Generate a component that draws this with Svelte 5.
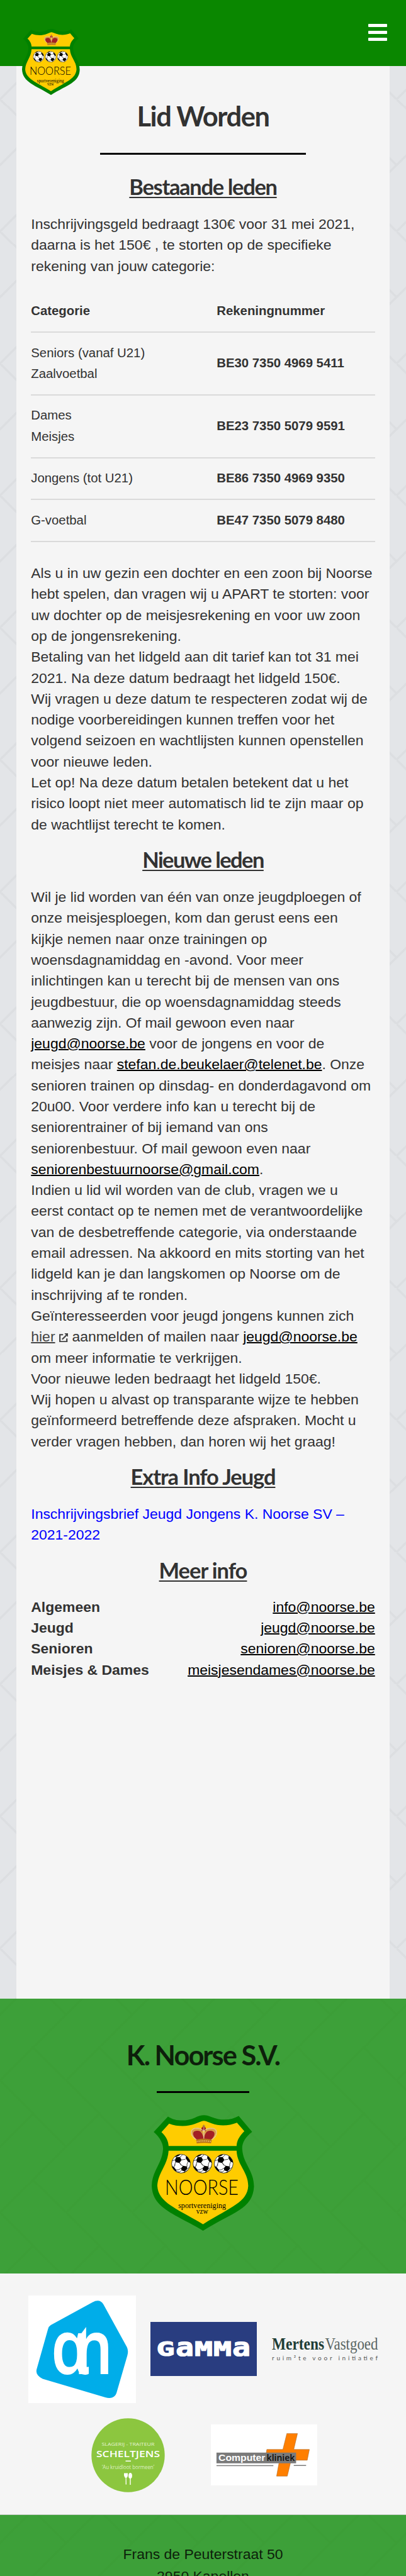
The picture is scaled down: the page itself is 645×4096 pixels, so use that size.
<script>
  const accounts = [
    { names: ['Seniors (vanaf U21)', 'Zaalvoetbal'], iban: 'BE30 7350 4969 5411' },
    { names: ['Dames', 'Meisjes'], iban: 'BE23 7350 5079 9591' },
    { names: ['Jongens (tot U21)'], iban: 'BE86 7350 4969 9350' },
    { names: ['G-voetbal'], iban: 'BE47 7350 5079 8480' }
  ];
  const contacts = [
    ['Algemeen', 'info@noorse.be'],
    ['Jeugd', 'jeugd@noorse.be'],
    ['Senioren', 'senioren@noorse.be'],
    ['Meisjes & Dames', 'meisjesendames@noorse.be']
  ];
</script>

{#snippet ball(cx)}
  <g transform="translate({cx} 427)">
    <circle r="75" fill="#fff" />
    <g fill="#000">
      <path d="M-38 -52L-8 -53L5 -30L-12 -6L-44 -12L-48 -30Z" />
      <path d="M16 17L48 22L50 42L30 62L4 54L2 36Z" />
      <path d="M40 -62Q70 -40 75 -8L56 -16L38 -42Z" />
      <path d="M-74 16L-56 28L-38 50L-36 66Q-66 48 -74 16Z" />
      <path d="M-50 -56Q-30 -74 -4 -75L-14 -66L-38 -54Z" />
      <path d="M10 74Q40 70 56 50L40 60Z" />
    </g>
    <path d="M5 -30L36 -36M-12 -6L2 12L16 17M-44 -12L-52 14L-56 28M-48 -30L-70 -24M-8 -53L12 -70M-52 14L-44 10M2 36L-18 48L-38 50M2 12L-10 -6M56 -16L48 4L48 22M30 62L24 74M4 54L-10 66L-36 62M50 42L66 28" fill="none" stroke="#111" stroke-width="4" />
    <circle r="75" fill="none" stroke="#111" stroke-width="4" />
  </g>
{/snippet}

{#snippet crest()}
  <svg class="crest" viewBox="42 38 817 925" preserveAspectRatio="none" aria-label="K. Noorse S.V.">
    <path fill="#008100" d="M172 50C235 92 325 88 385 60C440 34 470 32 520 54C600 86 675 80 737 45L844 172C790 215 762 260 765 310C772 430 858 480 859 610C850 790 690 815 452 963C235 830 50 790 42 605C45 480 125 430 133 310C134 260 100 210 58 174Z" />
    <g fill="#fc0">
      <path d="M181 107C250 134 335 130 385 110L440 88Q459 80 478 88L520 105C590 130 660 124 723 99L782 168C740 210 722 245 720 285H177C175 250 160 210 120 175Z" />
      <path d="M177 323H720C725 440 813 490 813 605C805 735 680 770 452 911C230 780 95 735 87 605C90 500 170 440 177 323Z" />
    </g>
    <g>
      <path d="M400 235C350 205 345 155 385 145C430 135 445 160 458 185C470 160 490 135 535 145C570 155 565 205 520 235Z" fill="#d9a14a" />
      <path d="M400 235C365 200 365 170 395 165C435 158 445 180 458 225C470 180 480 158 522 165C552 170 550 205 518 235Z" fill="#a31f24" />
      <path d="M440 140Q458 125 474 140L476 170L458 160L438 170Z" fill="#a31f24" />
      <path d="M402 237C345 205 345 150 390 145C430 140 445 155 458 170C470 155 490 140 530 145C572 150 570 205 518 237M458 118V232" fill="none" stroke="#e6cdae" stroke-width="8" stroke-dasharray="7 3" />
      <path d="M447 127H469M458 116V140" stroke="#9b6a35" stroke-width="6" />
      <path d="M396 234Q458 218 522 234L516 264Q458 256 402 266Z" fill="#b9771c" />
      <path d="M402 250Q458 240 516 250" fill="none" stroke="#f3d38a" stroke-width="7" stroke-dasharray="8 7" />
    </g>
    {@render ball(276)}
    {@render ball(447)}
    {@render ball(617)}
    <text x="148" y="679" font-family="Lato" font-weight="300" font-size="163" textLength="588" lengthAdjust="spacingAndGlyphs">NOORSE</text>
    <text x="254" y="783" font-family="Liberation Serif" font-size="66" textLength="382" lengthAdjust="spacingAndGlyphs">sportvereniging</text>
    <text x="398" y="828" font-family="Liberation Serif" font-size="66" textLength="95" lengthAdjust="spacingAndGlyphs">vzw</text>
  </svg>
{/snippet}

<div class="page">
  <header>
    <div class="logo">{@render crest()}</div>
    <button class="menu" aria-label="Menu"><i></i><i></i><i></i></button>
  </header>

  <main>
    <h1>Lid Worden</h1>
    <div class="rule"></div>

    <h2 class="first">Bestaande leden</h2>
    <p>Inschrijvingsgeld bedraagt 130€ voor 31 mei 2021, daarna is het 150€ , te storten op de specifieke rekening van jouw categorie:</p>

    <table>
      <thead>
        <tr><th>Categorie</th><th>Rekeningnummer</th></tr>
      </thead>
      <tbody>
        {#each accounts as account}
          <tr>
            <td>{#each account.names as name}<div>{name}</div>{/each}</td>
            <td><b>{account.iban}</b></td>
          </tr>
        {/each}
      </tbody>
    </table>

    <p>
      Als u in uw gezin een dochter en een zoon bij Noorse hebt spelen, dan vragen wij u APART te storten: voor uw dochter op de meisjesrekening en voor uw zoon op de jongensrekening.<br />
      Betaling van het lidgeld aan dit tarief kan tot 31 mei 2021. Na deze datum bedraagt het lidgeld 150€.<br />
      Wij vragen u deze datum te respecteren zodat wij de nodige voorbereidingen kunnen treffen voor het volgend seizoen en wachtlijsten kunnen openstellen voor nieuwe leden.<br />
      Let op! Na deze datum betalen betekent dat u het risico loopt niet meer automatisch lid te zijn maar op de wachtlijst terecht te komen.
    </p>

    <h2 class="new">Nieuwe leden</h2>
    <p>
      Wil je lid worden van één van onze jeugdploegen of onze meisjesploegen, kom dan gerust eens een<br />kijkje nemen naar onze trainingen op<br />woensdagnamiddag en -avond. Voor meer inlichtingen kan u terecht bij de mensen van ons jeugdbestuur, die op woensdagnamiddag steeds aanwezig zijn. Of mail gewoon even naar <a href="#mail">jeugd@noorse.be</a> voor de jongens en voor de meisjes naar <a href="#mail">stefan.de.beukelaer@telenet.be</a>. Onze senioren trainen op dinsdag- en donderdagavond om 20u00. Voor verdere info kan u terecht bij de seniorentrainer of bij iemand van ons<br />seniorenbestuur. Of mail gewoon even naar <a href="#mail">seniorenbestuurnoorse@gmail.com</a>.<br />
      Indien u lid wil worden van de club, vragen we u<br />eerst contact op te nemen met de verantwoordelijke van de desbetreffende categorie, via onderstaande email adressen. Na akkoord en mits storting van het lidgeld kan je dan langskomen op Noorse om de inschrijving af te ronden.<br />
      Geïnteresseerden voor jeugd jongens kunnen zich <a class="soft" href="#hier">hier</a><svg class="ext" viewBox="0 0 14 14"><path d="M6 2.2H1.1V12.9H11.8V8" /><path d="M4.6 9.4L11.4 2.6" /><path class="tip" d="M8 0H14V6L11.9 4.2L10 2.1Z" /></svg> aanmelden of mailen naar <a href="#mail">jeugd@noorse.be</a> om meer informatie te verkrijgen.<br />
      Voor nieuwe leden bedraagt het lidgeld 150€.<br />
      Wij hopen u alvast op transparante wijze te hebben geïnformeerd betreffende deze afspraken. Mocht u verder vragen hebben, dan horen wij het graag!
    </p>

    <h2 class="extra">Extra Info Jeugd</h2>
    <p><a class="file" href="#brief">Inschrijvingsbrief Jeugd Jongens K. Noorse SV – 2021-2022</a></p>

    <h2 class="more">Meer info</h2>
    <ul>
      {#each contacts as [label, mail]}
        <li><b>{label}</b><a href="#mail">{mail}</a></li>
      {/each}
    </ul>
  </main>

  <section class="club">
    <h1>K. Noorse S.V.</h1>
    <div class="rule short"></div>
    <div class="badge">{@render crest()}</div>
  </section>

  <section class="sponsors">
    <div class="row">
      <svg width="171" height="171" viewBox="0 0 171 171">
        <rect width="171" height="171" fill="#fff" />
        <path fill="#00ade9" d="M35.7 47.1L102 10.8Q113.5 4.500 119.400 14.200L156.600 82.100Q159.500 88 157.300 95.500L140 155.200Q136 165.500 122.300 162L22.800 132.500Q10 126 13.600 116L31.300 53.300Q32.500 49 35.700 47.100Z" />
        <g fill="#fff" font-family="Noto Sans" font-weight="600" font-size="120">
          <text x="36" y="125" textLength="61" lengthAdjust="spacingAndGlyphs">ɑ</text>
          <text x="73" y="125" textLength="61" lengthAdjust="spacingAndGlyphs">n</text>
        </g>
        <path fill="#fff" d="M79.200 67L91.800 50V80H79.200Z" />
      </svg>
      <svg width="169" height="86" viewBox="0 0 169 86">
        <rect width="169" height="86" fill="#293d80" />
        <g fill="#fff" stroke="#fff" stroke-width="1.200" font-family="DejaVu Sans Mono" font-weight="700" font-size="32">
          <text x="9.500" y="54" textLength="29" lengthAdjust="spacingAndGlyphs">G</text>
          <text x="40" y="54" font-size="41" textLength="29" lengthAdjust="spacingAndGlyphs">a</text>
          <text x="70" y="54" textLength="29" lengthAdjust="spacingAndGlyphs">M</text>
          <text x="100" y="54" textLength="29" lengthAdjust="spacingAndGlyphs">M</text>
          <text x="130" y="54" font-size="41" textLength="29" lengthAdjust="spacingAndGlyphs">a</text>
        </g>
      </svg>
      <svg width="169" height="46" viewBox="0 0 169 46">
        <g font-family="Liberation Serif" font-size="27">
          <text x="0" y="24" font-weight="700" fill="#1f3d36" textLength="83" lengthAdjust="spacingAndGlyphs">Mertens</text>
          <text x="84.500" y="24" fill="#5a6663" textLength="84" lengthAdjust="spacingAndGlyphs">Vastgoed</text>
        </g>
        <text x="0" y="40.500" font-family="Lato" font-size="10" fill="#555" textLength="168">ruim²te voor initiatief</text>
      </svg>
    </div>
    <div class="row second">
      <svg width="117" height="118" viewBox="0 0 117 118">
        <ellipse cx="58.500" cy="59" rx="58.200" ry="58.700" fill="#8cc63f" />
        <g fill="#fff" font-family="Open Sans">
          <text x="16.500" y="43.500" font-size="7.500" fill="#e4f3cf" textLength="84" lengthAdjust="spacingAndGlyphs">SLAGERIJ - TRAITEUR</text>
          <text x="8" y="61.600" font-size="15.200" font-weight="600" textLength="101" lengthAdjust="spacingAndGlyphs">SCHELTJENS</text>
          <rect x="54.500" y="67.500" width="8.500" height="1.500" />
          <text x="17" y="80.500" font-size="9" fill="#dcefc2" textLength="83" lengthAdjust="spacingAndGlyphs">‘Au kruidloot bormeen’</text>
          <path d="M52 87.500H58V92Q57 95 55.700 95L56 105.500H54.600L54.500 95Q52.500 94 52 91Z" />
          <ellipse cx="62" cy="91.500" rx="2.900" ry="4.500" /><rect x="61.300" y="94" width="1.400" height="12" />
        </g>
      </svg>
      <svg width="169" height="97" viewBox="0 0 169 97">
        <rect width="169" height="97" fill="#fff" />
        <path fill="#ff7f00" stroke="#a8692b" stroke-width=".6" d="M120.700 14.400H137.600L131.700 39.800H156.500L153.100 56.900H127.500L121.400 82.200H104.400L109 56.900H86L88.900 39.800H114.400Z" />
        <rect x="8.900" y="44.800" width="126.500" height="17" fill="#7a7a7a" />
        <text x="12" y="57.700" font-family="Liberation Sans" font-weight="700" font-size="15" fill="#fff" textLength="74.500" lengthAdjust="spacingAndGlyphs">Computer</text>
        <text x="88.500" y="57.700" font-family="Noto Sans" font-weight="600" font-size="13.500" fill="#111" textLength="45" lengthAdjust="spacingAndGlyphs">kliniek</text>
        <path d="M8.900 65.500H99.300M131.700 65.200H151.300" stroke="#7a7a7a" stroke-width="1.500" />
      </svg>
    </div>
  </section>

  <footer>
    <div>Frans de Peuterstraat 50</div>
    <div>2950 Kapellen</div>
  </footer>
</div>

<style>
  :global(body) { background: #e3e5e8; }
  .page {
    width: 645px;
    height: 4096px;
    overflow: hidden;
    position: relative;
    display: flex;
    flex-direction: column;
    color: #323232;
    font: 22.96px/33.3px "Liberation Sans", Arial, sans-serif;
    background: #e3e5e8 url("data:image/svg+xml,%3Csvg xmlns='http://www.w3.org/2000/svg' viewBox='0 0 64 128' width='64' height='128'%3E%3Cpath d='M-1 129L64 64M0 64L33 31M32 -32L-1 1M-1 -1L65 65M31 95L65 129M-1 65L1 63M63 65L65 63M31 33L33 31' fill='none' stroke='%23000' stroke-opacity='.033' stroke-width='2'/%3E%3C/svg%3E") 0 -52.5px / 105.03px 210.06px;
  }
  header {
    flex: none;
    height: 105px;
    background: #0a8700;
    display: flex;
    justify-content: space-between;
    padding: 0 30.500px 0 34.600px;
    box-sizing: border-box;
    position: relative;
    z-index: 1;
  }
  .crest { display: block; width: 100%; height: 100%; overflow: visible; }
  .logo { width: 91.700px; height: 105px; margin-top: 46px; }
  .menu { all: unset; display: flex; flex-direction: column; gap: 5.600px; margin-top: 38.300px; }
  .menu i { width: 30px; height: 5.200px; background: #fff; border-radius: 1px; }

  main {
    flex: none;
    box-sizing: border-box;
    width: 592.500px;
    height: 3072.600px;
    margin: 0 26.250px;
    padding: 52.700px 23px 0;
    background: #f5f5f5;
  }
  h1, h2 { margin: 0; text-align: center; font-family: Lato, sans-serif; font-weight: 700; }
  h1 { font-size: 43.400px; line-height: 52px; letter-spacing: -1.400px; }
  .club h1 { letter-spacing: -1.950px; }
  h2 {
    font-size: 34.450px;
    line-height: 50px;
    letter-spacing: -1.300px;
    margin: 13.900px 0 18.200px;
    text-decoration: underline;
    text-decoration-thickness: 1.700px;
    text-underline-offset: 2.500px;
  }
  h2.first { margin-top: 25.800px; }
  h2.new { letter-spacing: -1.550px; }
  h2.extra { letter-spacing: -1.050px; }
  h2.more { margin-bottom: 17px; letter-spacing: -1px; }
  .rule { width: 326.600px; height: 3.100px; margin: 33.200px auto 0; background: #000; }
  p { margin: 0; padding-right: 1.500px; }
  a { color: #000; text-decoration: underline; text-decoration-thickness: 1.700px; }
  a.soft { color: #444; }
  a.file { color: #00f; text-decoration: none; }
  .ext { width: 14.500px; height: 14.500px; margin-left: 6px; vertical-align: -1px; fill: none; stroke: #444; stroke-width: 2.100; }
  .ext .tip { fill: #444; stroke: none; }

  table {
    width: 546.400px;
    margin: 22.300px 0 33px;
    border-collapse: separate;
    border-spacing: 0;
    font-size: 20.350px;
    table-layout: fixed;
  }
  th, td { padding: 15.700px 0; text-align: left; border-bottom: 2px solid #dadada; vertical-align: middle; }
  th:first-child { width: 295px; }

  ul { list-style: none; margin: 0; padding: 0; }
  li { display: flex; justify-content: space-between; }

  .club {
    flex: none;
    box-sizing: border-box;
    height: 437.800px;
    padding-top: 63.900px;
    background: rgba(8, 137, 0, .755);
    color: #0d1f0b;
  }
  .rule.short { width: 146.400px; height: 3.300px; margin-top: 31.400px; }
  .badge { width: 162.500px; height: 184px; margin: 34.800px auto 0; }

  .sponsors {
    flex: none;
    box-sizing: border-box;
    height: 383.600px;
    padding-top: 34.400px;
    background: #f5f5f5;
    border-bottom: 1px solid #c4ccc4;
  }
  .row { display: flex; align-items: center; justify-content: center; gap: 23.500px; }
  .row svg { display: block; flex: none; overflow: visible; }
  .row.second { margin-top: 24px; gap: 73px; padding-left: 3px; }

  footer {
    flex: 1;
    padding-top: 45px;
    text-align: center;
    line-height: 35px;
    color: #0d1f0b;
    background: rgba(8, 137, 0, .755);
  }
</style>
